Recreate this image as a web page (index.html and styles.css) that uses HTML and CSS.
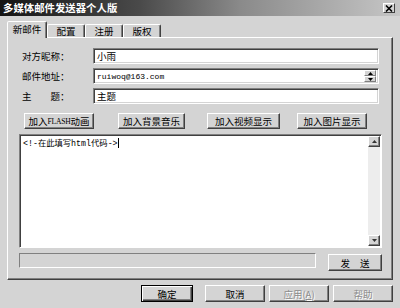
FILE: index.html
```html
<!DOCTYPE html>
<html>
<head>
<meta charset="utf-8">
<link rel="stylesheet" href="styles.css">
</head>
<body>
<div class="window">
  <div class="titlebar">
    <span class="title">多媒体邮件发送器个人版</span>
    <span class="close"><svg width="8" height="7" viewBox="0 0 8 7"><path d="M1 0.5L7 6.5M7 0.5L1 6.5" stroke="#000" stroke-width="1.6"/></svg></span>
  </div>
  <div class="tabs">
    <div class="tab active">新邮件</div>
    <div class="tab">配置</div>
    <div class="tab">注册</div>
    <div class="tab">版权</div>
  </div>
  <div class="panel">
    <div class="row">
      <span class="label"><span class="name">对方昵称</span><span>：</span></span>
      <div class="field">小雨</div>
    </div>
    <div class="row">
      <span class="label"><span class="name">邮件地址</span><span>：</span></span>
      <div class="field"><span class="mono">ruiwoq@163.com</span>
        <span class="spin">
          <span class="sb"><svg width="5" height="3" viewBox="0 0 5 3"><path d="M0 3L2.5 0L5 3Z" fill="#000"/></svg></span>
          <span class="sb"><svg width="5" height="3" viewBox="0 0 5 3"><path d="M0 0L2.5 3L5 0Z" fill="#000"/></svg></span>
        </span>
      </div>
    </div>
    <div class="row">
      <span class="label"><span class="name"><span>主</span><span>题</span></span><span>：</span></span>
      <div class="field">主题</div>
    </div>
    <div class="btnrow">
      <button class="btn tool">加入<span class="latin">FLASH</span>动画</button>
      <button class="btn tool">加入背景音乐</button>
      <button class="btn tool">加入视频显示</button>
      <button class="btn tool">加入图片显示</button>
    </div>
    <div class="editor">
      <div class="code">&lt;!-在此填写html代码-&gt;<span class="caret"></span></div>
      <div class="scrollbar">
        <span class="arrow"><svg width="5" height="3" viewBox="0 0 5 3"><path d="M0 3L2.5 0L5 3Z" fill="#333"/></svg></span>
        <span class="track"></span>
        <span class="arrow"><svg width="5" height="3" viewBox="0 0 5 3"><path d="M0 0L2.5 3L5 0Z" fill="#333"/></svg></span>
      </div>
    </div>
    <div class="sendrow">
      <div class="status"></div>
      <button class="btn send">发 送</button>
    </div>
  </div>
  <div class="footer">
    <button class="btn fbtn default">确定</button>
    <button class="btn fbtn">取消</button>
    <button class="btn fbtn disabled">应用(<u>A</u>)</button>
    <button class="btn fbtn disabled">帮助</button>
  </div>
</div>
</body>
</html>
```
FILE: styles.css
```css
* { box-sizing: border-box; margin: 0; padding: 0; }
html, body { width: 400px; height: 308px; overflow: hidden; }
body {
  background: #d4d4d4;
  font-family: "Noto Sans CJK SC", "Liberation Sans", sans-serif;
  font-size: 9.5px;
  color: #000;
}
.window {
  width: 400px;
  height: 308px;
  display: flex;
  flex-direction: column;
  background: #d4d4d4;
}
.titlebar {
  height: 16px;
  flex: none;
  background: linear-gradient(to right, #141414 0%, #4a4a4a 35%, #8a8a8a 60%, #c6c6c6 100%);
  display: flex;
  align-items: center;
  justify-content: space-between;
  padding: 0 5px 0 3px;
}
.title {
  color: #fff;
  font-weight: bold;
  font-size: 10.4px;
  line-height: 16px;
}
.close {
  width: 12px;
  height: 10px;
  background: #d4d4d4;
  border: 1px solid;
  border-color: #fff #404040 #404040 #fff;
  display: flex;
  align-items: center;
  justify-content: center;
}
.tabs {
  height: 21px;
  flex: none;
  display: flex;
  align-items: flex-end;
  padding-left: 7px;
}
.tab {
  width: 38px;
  height: 13px;
  border: 1px solid;
  border-bottom: none;
  border-color: #fff #404040 transparent #fff;
  border-radius: 2px 2px 0 0;
  box-shadow: inset -1px 0 #808080;
  text-align: center;
  font-size: 9.5px;
  line-height: 12px;
}
.tab.active {
  width: 40px;
  height: 17px;
  margin-bottom: -1px;
  background: #d4d4d4;
  position: relative;
  z-index: 1;
  line-height: 15px;
}
.panel {
  margin-left: 7px;
  width: 386px;
  height: 243px;
  flex: none;
  border: 1px solid;
  border-color: #fff #404040 #404040 #fff;
  box-shadow: inset -1px -1px #808080;
  padding: 10px 10px 0 11px;
  display: flex;
  flex-direction: column;
}
.row {
  display: flex;
  align-items: center;
  height: 16px;
  padding-left: 3px;
  margin-right: 3px;
  margin-bottom: 4px;
}
.label {
  width: 71px;
  display: flex;
  font-size: 9.5px;
}
.name {
  width: 38px;
  display: flex;
  justify-content: space-between;
}
.field {
  flex: 1;
  height: 16px;
  background: #fff;
  border: 1px solid;
  border-color: #808080 #fff #fff #808080;
  box-shadow: inset 1px 1px #404040, inset -1px -1px #d4d4d4;
  padding: 0 2px 0 3px;
  display: flex;
  align-items: center;
  font-size: 9.5px;
}
.mono {
  font-family: "Liberation Mono", monospace;
  font-size: 8px;
}
.spin {
  margin-left: auto;
  width: 12px;
  height: 12px;
  display: flex;
  flex-direction: column;
}
.sb {
  flex: 1;
  background: #d4d4d4;
  border: 1px solid;
  border-color: #fff #808080 #808080 #fff;
  display: flex;
  align-items: center;
  justify-content: center;
}
.btnrow {
  display: flex;
  height: 16px;
  margin-top: 5px;
  padding-left: 5px;
}
.btn {
  background: #d4d4d4;
  border: 1px solid;
  border-color: #fff #404040 #404040 #fff;
  box-shadow: inset -1px -1px #808080;
  font-family: "Noto Sans CJK SC", "Liberation Sans", sans-serif;
  font-size: 9.5px;
  color: #000;
  display: flex;
  align-items: center;
  justify-content: center;
  padding: 0;
  white-space: nowrap;
}
.latin {
  font-family: "Liberation Serif", serif;
  font-size: 7.6px;
  letter-spacing: -0.2px;
}
.tool { height: 16px; }
.tool:nth-child(1) { width: 70px; }
.tool:nth-child(2) { width: 67px; margin-left: 24px; }
.tool:nth-child(3) { width: 73px; margin-left: 22px; }
.tool:nth-child(4) { width: 70px; margin-left: 17px; }
.editor {
  margin-top: 5px;
  height: 114px;
  display: flex;
  background: #fff;
  border: 1px solid;
  border-color: #808080 #fff #fff #808080;
  box-shadow: inset 1px 1px #404040;
}
.code {
  flex: 1;
  padding: 3px 0 0 3px;
  font-family: "Liberation Mono", "Noto Sans CJK SC", monospace;
  font-size: 8.3px;
  line-height: 11px;
}
.caret {
  display: inline-block;
  width: 1px;
  height: 10px;
  background: #000;
  vertical-align: -2px;
}
.scrollbar {
  width: 12px;
  margin: 1px 1px 1px 0;
  display: flex;
  flex-direction: column;
  background: #ededed;
}
.arrow {
  height: 11px;
  background: #d4d4d4;
  border: 1px solid;
  border-color: #fff #404040 #404040 #fff;
  box-shadow: inset -1px -1px #808080;
  display: flex;
  align-items: center;
  justify-content: center;
}
.track { flex: 1; }
.sendrow {
  margin-top: 5px;
  display: flex;
  justify-content: space-between;
  align-items: flex-start;
}
.status {
  width: 297px;
  height: 15px;
  border: 1px solid;
  border-color: #808080 #fff #fff #808080;
}
.send {
  width: 54px;
  height: 17px;
  margin-top: 1px;
  word-spacing: 8px;
}
.footer {
  display: flex;
  justify-content: flex-end;
  padding-right: 7px;
  margin-top: 5px;
}
.fbtn {
  width: 60px;
  height: 17px;
  margin-left: 4px;
}
.fbtn.default {
  width: 52px;
  margin-right: 8px;
  border: 1px solid #000;
  box-shadow: inset 1px 1px #fff, inset -1px -1px #404040, inset -2px -2px #808080;
}
.fbtn.disabled {
  color: #8c8c8c;
  text-shadow: 1px 1px #fff;
}
```
